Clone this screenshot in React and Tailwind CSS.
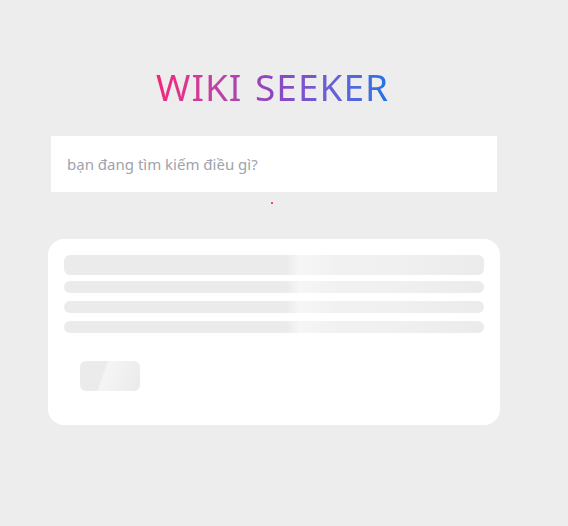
import React from "react";

const shimmer =
  "bg-[linear-gradient(90deg,#ebebeb_0%,#ebebeb_53%,#f6f6f6_56%,#f1f1f1_65%,#f0f0f0_80%,#ebebeb_100%)]";

export default function App() {
  return (
    <div className="min-h-[526px] w-full bg-[#ededed] font-['Noto_Sans',sans-serif]">
      <div className="ml-[48px] flex w-[452px] flex-col items-center pt-[61px]">
        <h1 className="mr-[3px] bg-gradient-to-r from-[#f5207a] via-[#8d44c2] to-[#1473e9] bg-clip-text text-[37px] font-normal leading-[52px] tracking-[1px] text-transparent [word-spacing:2px]">
          WIKI SEEKER
        </h1>
        <div className="mt-[23px] w-[446px]">
          <input
            type="text"
            placeholder="bạn đang tìm kiếm điều gì?"
            className="h-[56px] w-full bg-white px-4 text-[15px] text-gray-700 outline-none placeholder:text-[#9ea3ad]"
          />
        </div>
        <div className="mt-[10px] h-[2px] w-[2px] translate-x-[-2px] bg-[#e8505b]" />
        <div className="mt-[35px] w-full rounded-2xl bg-white px-4 pb-[34px] pt-4">
          <div className={`h-5 rounded-md ${shimmer}`} />
          <div className="mt-[6px] flex flex-col gap-2">
            <div className={`h-3 rounded-md ${shimmer}`} />
            <div className={`h-3 rounded-md ${shimmer}`} />
            <div className={`h-3 rounded-md ${shimmer}`} />
          </div>
          <div className="ml-4 mt-[28px] h-[30px] w-[60px] rounded-md bg-[linear-gradient(110deg,#ebebeb_0%,#ebebeb_38%,#f5f5f5_42%,#ebebeb_95%)]" />
        </div>
      </div>
    </div>
  );
}
